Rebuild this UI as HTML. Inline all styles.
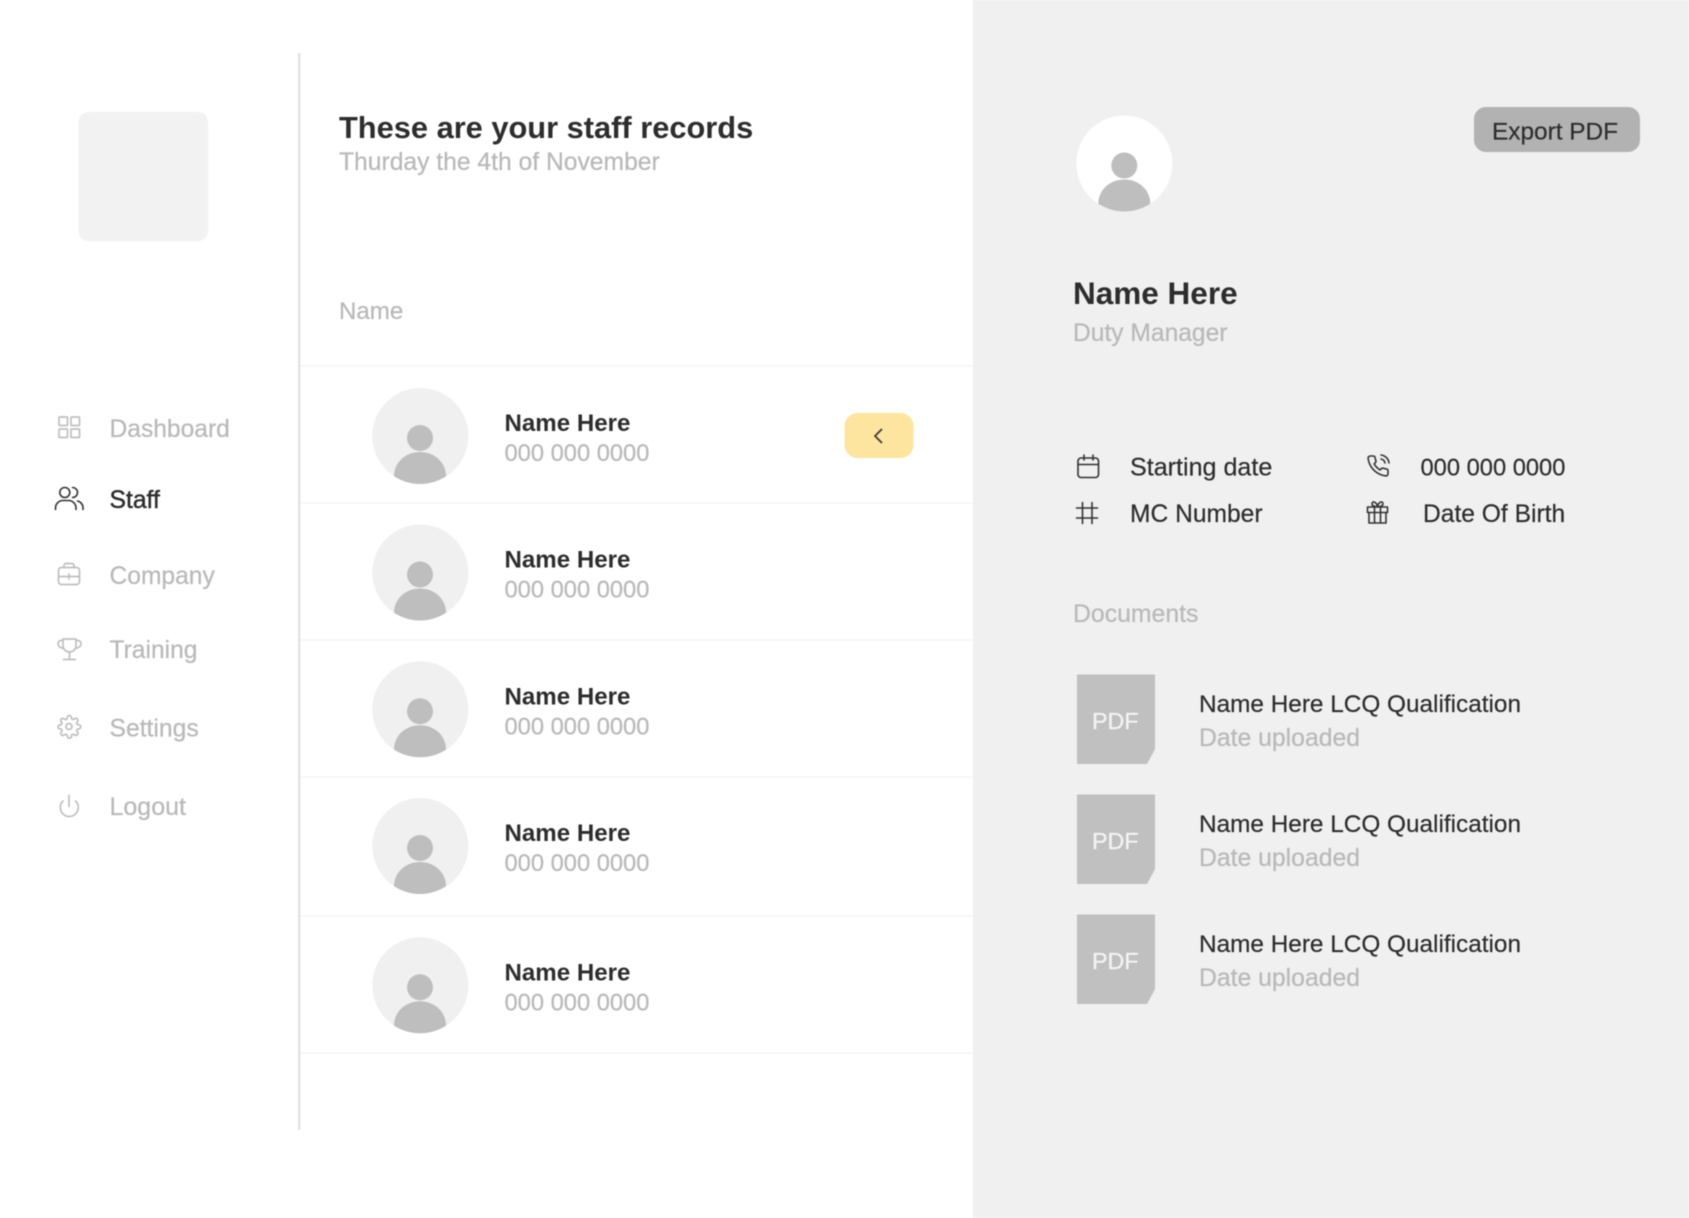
<!DOCTYPE html>
<html lang="en">
<head>
<meta charset="utf-8">
<title>Staff records</title>
<style>
html,body{margin:0;padding:0;background:#fff;width:1689px;height:1218px;overflow:hidden}
svg{display:block;filter:blur(.45px)}
text{font-family:"Liberation Sans",Arial,sans-serif;font-size:24.4px;fill:#2d2d2d;stroke:#2d2d2d;stroke-width:.2}
text.g{fill:#b9b9b9;stroke:#b9b9b9;stroke-width:.25}
text.b{font-weight:700;stroke-width:0}
.ic{fill:none;stroke:#c0c0c0;stroke-width:1.7;stroke-linecap:round;stroke-linejoin:round}
.dk{fill:none;stroke:#333;stroke-width:1.6;stroke-linecap:round;stroke-linejoin:round}
</style>
</head>
<body>
<svg width="1689" height="1218" viewBox="0 0 1689 1218" xmlns="http://www.w3.org/2000/svg">
<rect width="1689" height="1218" fill="#fff"/>
<rect x="973" width="716" height="1218" fill="#f0f0f0"/>
<rect x="298" y="53" width="2.400" height="1077" fill="#e2e2e2"/>
<rect x="78.500" y="112" width="129.500" height="129" rx="10" fill="#f2f2f2"/>

<!-- sidebar -->
<g class="ic">
<rect x="59" y="417" width="8.500" height="8.500" rx=".8"/><rect x="71" y="417" width="8.500" height="8.500" rx=".8"/><rect x="59" y="429" width="8.500" height="8.500" rx=".8"/><rect x="71" y="429" width="8.500" height="8.500" rx=".8"/>
<path d="M58.500 570.500a3 3 0 0 1 3-3h15a3 3 0 0 1 3 3v11a3 3 0 0 1-3 3h-15a3 3 0 0 1-3-3zM64 567.500v-2a2 2 0 0 1 2-2h6a2 2 0 0 1 2 2v2M58.500 576.500h21M69 574v5"/>
<path d="M63 639h13v6.500a6.500 6.500 0 0 1-13 0zM63 640.500h-2a3 3 0 0 0-3 3c0 2.800 2.500 4.500 5.500 5M76 640.500h2a3 3 0 0 1 3 3c0 2.800-2.500 4.500-5.500 5M69.500 652v7M63.500 659.500h12"/>
<path transform="translate(57,714.500) scale(1.030)" d="M19.4 15a1.65 1.65 0 0 0 .33 1.82l.06.06a2 2 0 0 1 0 2.83 2 2 0 0 1-2.83 0l-.06-.06a1.65 1.65 0 0 0-1.82-.33 1.65 1.65 0 0 0-1 1.51V21a2 2 0 0 1-2 2 2 2 0 0 1-2-2v-.09A1.65 1.65 0 0 0 9 19.4a1.65 1.65 0 0 0-1.82.33l-.06.06a2 2 0 0 1-2.83 0 2 2 0 0 1 0-2.83l.06-.06a1.65 1.65 0 0 0 .33-1.82 1.65 1.65 0 0 0-1.51-1H3a2 2 0 0 1-2-2 2 2 0 0 1 2-2h.09A1.65 1.65 0 0 0 4.6 9a1.65 1.65 0 0 0-.33-1.82l-.06-.06a2 2 0 0 1 0-2.83 2 2 0 0 1 2.83 0l.06.06a1.65 1.65 0 0 0 1.82.33H9a1.65 1.65 0 0 0 1-1.51V3a2 2 0 0 1 2-2 2 2 0 0 1 2 2v.09a1.65 1.65 0 0 0 1 1.51 1.65 1.65 0 0 0 1.82-.33l.06-.06a2 2 0 0 1 2.83 0 2 2 0 0 1 0 2.83l-.06.06a1.65 1.65 0 0 0-.33 1.82V9a1.65 1.65 0 0 0 1.51 1H21a2 2 0 0 1 2 2 2 2 0 0 1-2 2h-.09a1.65 1.65 0 0 0-1.51 1z"/>
<circle cx="69" cy="726.500" r="3"/>
<path d="M63 801a9 9 0 1 0 12.500 0M69 795.500v11"/>
</g>
<g class="dk">
<circle cx="64.800" cy="492.500" r="5"/>
<path d="M72.500 487.500a5 5 0 0 1 0 10M55.500 509.500v-1.500a7.500 7.500 0 0 1 7.500-7.500h5.500a7.500 7.500 0 0 1 7.500 7.500v1.500M77.500 501a7 7 0 0 1 5.500 7v1.500"/>
</g>
<text x="109.500" y="437" class="g" style="font-size:24.600px">Dashboard</text>
<text x="109.500" y="508" style="stroke-width:.45;font-size:24.700px">Staff</text>
<text x="109.500" y="584" class="g" style="font-size:24.600px">Company</text>
<text x="109.500" y="658" class="g" style="font-size:24.600px">Training</text>
<text x="109.500" y="736.500" class="g" style="font-size:24.700px">Settings</text>
<text x="109.500" y="815" class="g" style="font-size:25px">Logout</text>

<!-- header -->
<text x="339" y="138" class="b" style="font-size:30.800px">These are your staff records</text>
<text x="339" y="170" class="g" style="font-size:24.670px">Thurday the 4th of November</text>
<text x="339" y="319" class="g" style="font-size:24.100px">Name</text>

<!-- row lines -->
<g fill="#f3f3f3">
<rect x="300" y="365.300" width="673" height="1.500"/>
<rect x="300" y="502.300" width="673" height="1.500"/>
<rect x="300" y="639.300" width="673" height="1.500"/>
<rect x="300" y="776.300" width="673" height="1.500"/>
<rect x="300" y="915.300" width="673" height="1.500"/>
<rect x="300" y="1052.300" width="673" height="1.500"/>
</g>

<!-- rows -->
<g>
<circle cx="420.300" cy="436" r="48" fill="#f0f0f0"/><circle cx="420" cy="438" r="13" fill="#bebebe"/>
<path d="M394 476.300C394 462 406 452 420 452C434 452 446 462 446 476.300A48 48 0 0 1 394 476.300Z" fill="#bebebe"/>
<text x="504.500" y="431" class="b" style="font-size:24.100px">Name Here</text>
<text x="504.500" y="461" class="g" style="font-size:23.700px">000 000 0000</text>
</g>
<g transform="translate(0,136.500)">
<circle cx="420.300" cy="436" r="48" fill="#f0f0f0"/><circle cx="420" cy="438" r="13" fill="#bebebe"/>
<path d="M394 476.300C394 462 406 452 420 452C434 452 446 462 446 476.300A48 48 0 0 1 394 476.300Z" fill="#bebebe"/>
<text x="504.500" y="431" class="b" style="font-size:24.100px">Name Here</text>
<text x="504.500" y="461" class="g" style="font-size:23.700px">000 000 0000</text>
</g>
<g transform="translate(0,273.300)">
<circle cx="420.300" cy="436" r="48" fill="#f0f0f0"/><circle cx="420" cy="438" r="13" fill="#bebebe"/>
<path d="M394 476.300C394 462 406 452 420 452C434 452 446 462 446 476.300A48 48 0 0 1 394 476.300Z" fill="#bebebe"/>
<text x="504.500" y="431" class="b" style="font-size:24.100px">Name Here</text>
<text x="504.500" y="461" class="g" style="font-size:23.700px">000 000 0000</text>
</g>
<g transform="translate(0,410)">
<circle cx="420.300" cy="436" r="48" fill="#f0f0f0"/><circle cx="420" cy="438" r="13" fill="#bebebe"/>
<path d="M394 476.300C394 462 406 452 420 452C434 452 446 462 446 476.300A48 48 0 0 1 394 476.300Z" fill="#bebebe"/>
<text x="504.500" y="431" class="b" style="font-size:24.100px">Name Here</text>
<text x="504.500" y="461" class="g" style="font-size:23.700px">000 000 0000</text>
</g>
<g transform="translate(0,549.300)">
<circle cx="420.300" cy="436" r="48" fill="#f0f0f0"/><circle cx="420" cy="438" r="13" fill="#bebebe"/>
<path d="M394 476.300C394 462 406 452 420 452C434 452 446 462 446 476.300A48 48 0 0 1 394 476.300Z" fill="#bebebe"/>
<text x="504.500" y="431" class="b" style="font-size:24.100px">Name Here</text>
<text x="504.500" y="461" class="g" style="font-size:23.700px">000 000 0000</text>
</g>

<!-- yellow button -->
<rect x="844.500" y="413" width="69" height="45" rx="13" fill="#fde49f"/>
<path d="M881.500 429.500l-6.500 6.500 6.500 6.500" fill="none" stroke="#3a3a3a" stroke-width="1.800" stroke-linecap="round" stroke-linejoin="round"/>

<!-- right panel -->
<g transform="translate(704.300,-272.500)">
<circle cx="420" cy="436" r="48" fill="#fff"/><circle cx="420" cy="438" r="13" fill="#bebebe"/>
<path d="M394 476.300C394 462 406 452 420 452C434 452 446 462 446 476.300A48 48 0 0 1 394 476.300Z" fill="#bebebe"/>
</g>
<rect x="1474" y="107" width="166" height="45" rx="12" fill="#b2b2b2"/>
<text x="1492" y="139.300" style="font-size:24.400px">Export PDF</text>
<text x="1073" y="304" class="b" style="font-size:31.500px">Name Here</text>
<text x="1073" y="341" class="g" style="font-size:24.600px">Duty Manager</text>

<!-- info -->
<g class="dk">
<rect x="1078" y="458" width="20.500" height="19.500" rx="3"/><path d="M1078 464.500h20.500M1084 455v5M1093 455v5"/>
<path d="M1082.500 502.500v21M1092 502.500v21M1076.500 508h21M1076.500 518h21"/>
<path transform="translate(1366,454)" d="M22 16.92v3a2 2 0 0 1-2.180 2 19.790 19.790 0 0 1-8.630-3.070 19.500 19.500 0 0 1-6-6 19.790 19.790 0 0 1-3.070-8.670A2 2 0 0 1 4.110 2h3a2 2 0 0 1 2 1.720 12.840 12.840 0 0 0 .7 2.810 2 2 0 0 1-.45 2.110L8.090 9.910a16 16 0 0 0 6 6l1.270-1.270a2 2 0 0 1 2.110-.45 12.840 12.840 0 0 0 2.810.7A2 2 0 0 1 22 16.920zM15.050 5A5 5 0 0 1 19 8.950M15.050 1A9 9 0 0 1 23 8.940"/>
<path d="M1367.500 507h20v5.500h-20zM1369 512.500v10.500h17v-10.500M1374.500 507v16M1380.500 507v16M1377.500 507c-2-.2-5.500-.5-5.500-3.200 0-3 4.500-2.500 5.500 3.200c1-5.700 5.500-6.200 5.500-3.200 0 2.700-3.500 3-5.500 3.200"/>
</g>
<text x="1130" y="475.500" style="font-size:25.100px">Starting date</text>
<text x="1130" y="522" style="font-size:24.600px">MC Number</text>
<text x="1420.500" y="475.500" style="font-size:23.700px">000 000 0000</text>
<text x="1423" y="522" style="font-size:24.600px">Date Of Birth</text>

<text x="1073" y="622" class="g" style="font-size:24.800px">Documents</text>

<!-- documents -->
<g>
<polygon points="1077,674.500 1155,674.500 1155,749 1147,764 1077,764" fill="#c0c0c0"/>
<text x="1092" y="729" style="font-size:23.300px;fill:#f4f4f4;stroke:#f4f4f4">PDF</text>
<text x="1199" y="712" style="font-size:24.350px">Name Here LCQ Qualification</text>
<text x="1199" y="746" class="g" style="font-size:24.750px">Date uploaded</text>
</g>
<g transform="translate(0,120)">
<polygon points="1077,674.500 1155,674.500 1155,749 1147,764 1077,764" fill="#c0c0c0"/>
<text x="1092" y="729" style="font-size:23.300px;fill:#f4f4f4;stroke:#f4f4f4">PDF</text>
<text x="1199" y="712" style="font-size:24.350px">Name Here LCQ Qualification</text>
<text x="1199" y="746" class="g" style="font-size:24.750px">Date uploaded</text>
</g>
<g transform="translate(0,240)">
<polygon points="1077,674.500 1155,674.500 1155,749 1147,764 1077,764" fill="#c0c0c0"/>
<text x="1092" y="729" style="font-size:23.300px;fill:#f4f4f4;stroke:#f4f4f4">PDF</text>
<text x="1199" y="712" style="font-size:24.350px">Name Here LCQ Qualification</text>
<text x="1199" y="746" class="g" style="font-size:24.750px">Date uploaded</text>
</g>
</svg>
</body>
</html>
